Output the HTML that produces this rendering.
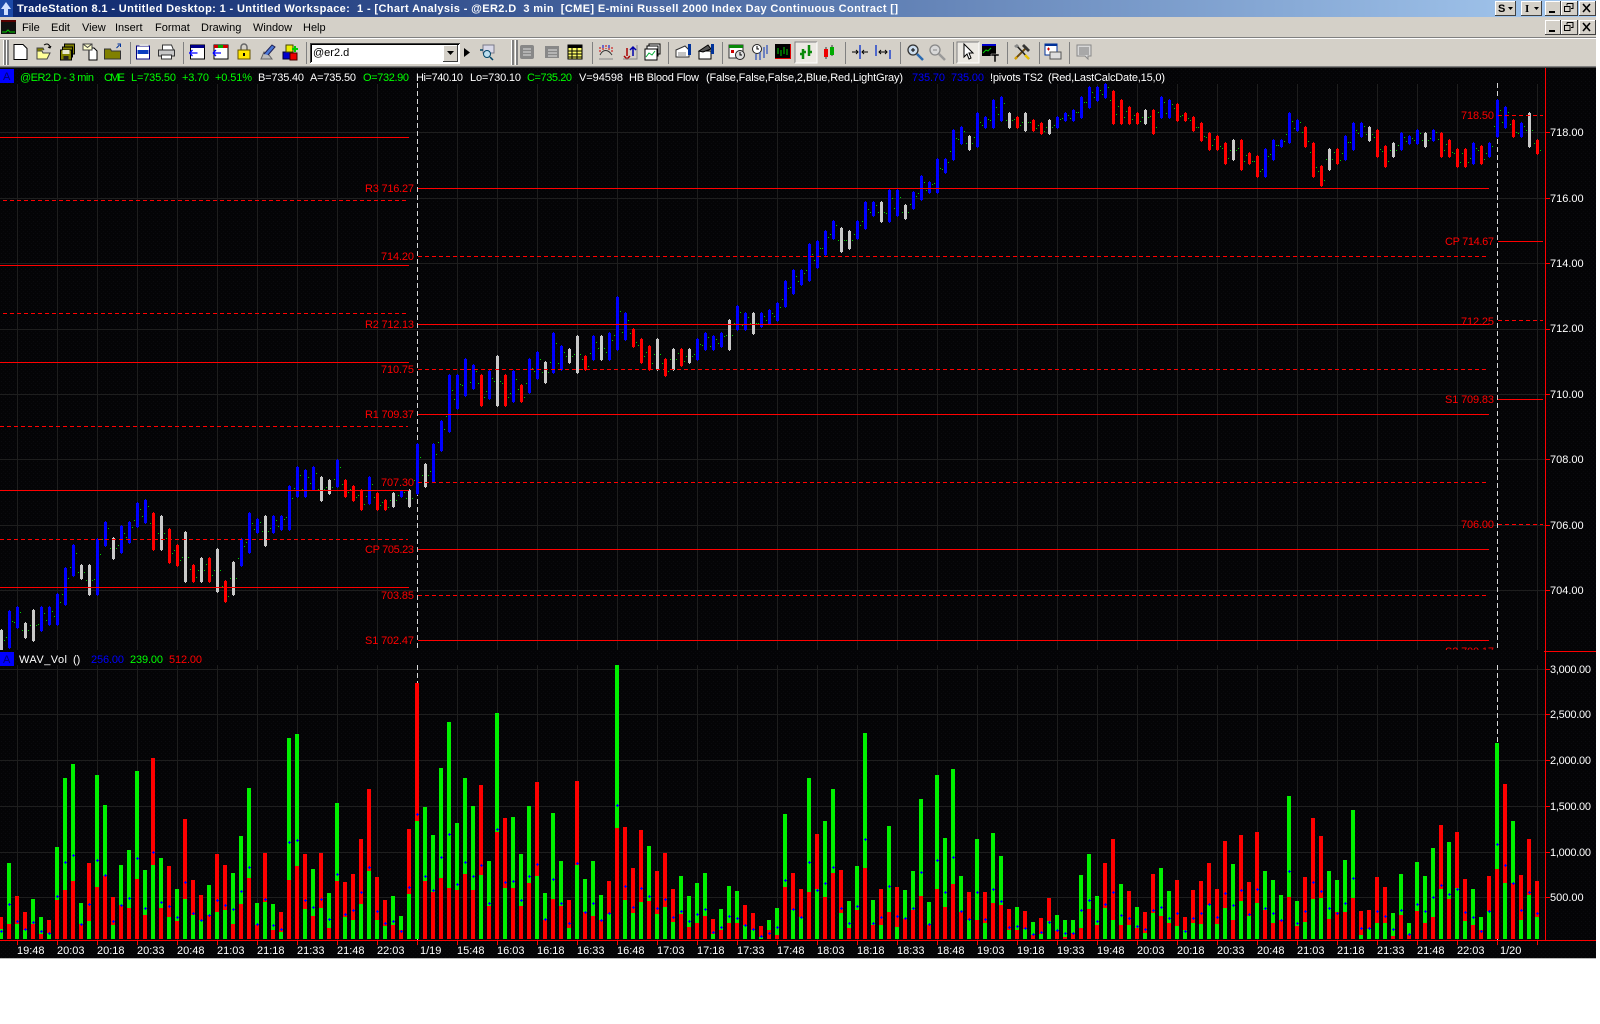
<!DOCTYPE html>
<html><head><meta charset="utf-8"><title>TradeStation 8.1</title>
<style>
html,body{margin:0;padding:0;background:#fff;width:1600px;height:1024px;overflow:hidden}
svg{position:absolute;left:0;top:0;display:block}
text{font-family:"Liberation Sans",Arial,sans-serif;font-size:11px;white-space:pre}
.m{fill:#000}.w{fill:#fff}.g{fill:#0f0}.b{fill:#00f}.r{fill:#f00}
</style></head><body>
<svg width="1600" height="1024" viewBox="0 0 1600 1024" xmlns="http://www.w3.org/2000/svg">
<defs>
<linearGradient id="tb" x1="0" x2="1" y1="0" y2="0"><stop offset="0" stop-color="#0a246a"/><stop offset="1" stop-color="#a6caf0"/></linearGradient>
<pattern id="dots" width="4" height="4" patternUnits="userSpaceOnUse"><rect width="4" height="4" fill="#040406"/><rect x="1" y="1" width="1" height="1" fill="#0b0b0f"/><rect x="3" y="3" width="1" height="1" fill="#09090d"/></pattern>
<clipPath id="pc"><rect x="0" y="68" width="1545" height="582"/></clipPath>
</defs>
<!-- window chrome -->
<rect x="0" y="0" width="1596" height="68" fill="#d4d0c8"/>
<rect x="0" y="0" width="1596" height="17" fill="url(#tb)"/>
<rect x="0" y="0" width="13" height="17" fill="#1c4aa8"/>
<path d="M6 2l5 7H8v6H4V9H1z" fill="#cfe0ff"/>
<text x="17" y="12" fill="#fff" textLength="881" lengthAdjust="spacing" style="font-weight:bold">TradeStation 8.1 - Untitled Desktop: 1 - Untitled Workspace:  1 - [Chart Analysis - @ER2.D  3 min  [CME] E-mini Russell 2000 Index Day Continuous Contract []</text>
<!-- menu -->
<rect x="1" y="20" width="15" height="14" fill="#101010"/><path d="M2 32h4l2-2 2 2h5" stroke="#0c0" fill="none"/><rect x="1" y="20" width="15" height="2" fill="#500"/>
<text x="22" y="31" class="m">File</text><text x="51" y="31" class="m">Edit</text><text x="82" y="31" class="m">View</text><text x="115" y="31" class="m">Insert</text><text x="155" y="31" class="m">Format</text><text x="201" y="31" class="m">Drawing</text><text x="253" y="31" class="m">Window</text><text x="303" y="31" class="m">Help</text>
<rect x="0" y="37" width="1596" height="1" fill="#808080"/><rect x="0" y="38" width="1596" height="1" fill="#fff"/>
<rect x="0" y="66" width="1596" height="1" fill="#808080"/><rect x="0" y="67" width="1596" height="1" fill="#404040"/>
<!-- title buttons -->
<g id="wb">
<g fill="#d4d0c8" stroke="none">
<rect x="1495" y="1" width="20" height="14"/><rect x="1521" y="1" width="20" height="14"/><rect x="1545" y="1" width="15" height="14"/><rect x="1561" y="1" width="16" height="14"/><rect x="1579" y="1" width="16" height="14"/>
<rect x="1545" y="20" width="15" height="14"/><rect x="1561" y="20" width="16" height="14"/><rect x="1579" y="20" width="16" height="14"/>
</g>
<path d="M1495.5 15V1.5H1515M1521.5 15V1.5H1541M1545.5 15V1.5H1560M1561.5 15V1.5H1577M1579.5 15V1.5H1595M1545.5 34V20.5H1560M1561.5 34V20.5H1577M1579.5 34V20.5H1595" stroke="#fff" fill="none"/>
<path d="M1495 15.5H1515.5V1M1521 15.5H1541.5V1M1545 15.5H1560.5V1M1561 15.5H1577.5V1M1579 15.5H1595.5V1M1545 34.5H1560.5V20M1561 34.5H1577.5V20M1579 34.5H1595.5V20" stroke="#404040" fill="none"/>
<text x="1498" y="12" class="m" style="font-weight:bold">S</text><path d="M1508 7h5l-2.5 3z"/>
<text x="1525" y="12" class="m" style="font-family:'Liberation Serif',serif;font-weight:bold">I</text><path d="M1534 7h5l-2.5 3z"/>
<path d="M1549 11h6v2h-6zM1549 30h6v2h-6z"/>
<path d="M1567 3.5h6v5h-2M1567 3.5v2M1564.5 6.5h5.5v5h-5.5zM1567 22.5h6v5h-2M1567 22.5v2M1564.5 25.5h5.5v5h-5.5z" stroke="#000" fill="none"/>
<path d="M1583 4l7 8M1590 4l-7 8M1583 23l7 8M1590 23l-7 8" stroke="#000" stroke-width="1.6" fill="none"/>
</g>
<!-- toolbar separators -->
<g fill="#808080">
<rect x="3" y="40" width="1" height="25" fill="#fff"/><rect x="4" y="40" width="2" height="25"/><rect x="6" y="40" width="1" height="25" fill="#fff"/><rect x="7" y="40" width="2" height="25"/>
<rect x="130" y="42" width="1" height="22"/><rect x="183" y="42" width="1" height="22"/><rect x="306" y="42" width="1" height="22"/>
<rect x="511" y="40" width="1" height="25" fill="#fff"/><rect x="512" y="40" width="2" height="25"/><rect x="515" y="40" width="1" height="25" fill="#fff"/><rect x="516" y="40" width="2" height="25"/>
<rect x="592" y="42" width="1" height="22"/><rect x="668" y="42" width="1" height="22"/><rect x="722" y="42" width="1" height="22"/><rect x="845" y="42" width="1" height="22"/><rect x="900" y="42" width="1" height="22"/><rect x="953" y="42" width="1" height="22"/><rect x="1007" y="42" width="1" height="22"/><rect x="1039" y="42" width="1" height="22"/><rect x="1069" y="42" width="1" height="22"/>
</g>
<!-- combo -->
<rect x="310" y="43" width="150" height="21" fill="#fff"/><path d="M310.5 63V43.5H460" stroke="#404040" fill="none"/><path d="M311.5 62V44.5H459" stroke="#000" fill="none"/>
<rect x="443" y="45" width="15" height="17" fill="#d4d0c8"/><path d="M443.5 62V45.5H458" stroke="#fff" fill="none"/><path d="M443 61.5H457.5V45" stroke="#404040" fill="none"/><path d="M447 51h7l-3.500 4z"/>
<text x="313" y="56" class="m">@er2.d</text>
<path d="M464 48l6 4.500-6 4.500z"/>
<!-- toolbar icons -->
<g transform="translate(20.500,52)"><path d="M-6.500-7.500h9l4 4v11h-13z" fill="#fff" stroke="#000"/></g>
<g transform="translate(44,52)"><path d="M-7-1h5l1 2h7l-3 6h-10z" fill="#ffff99" stroke="#444"/><path d="M-7-1v-3h6l1 2" fill="#808000" stroke="#444"/><path d="M0-7c3-2 5-1 6 2M7-6l-1 2-2-1" stroke="#000" fill="none"/></g>
<g transform="translate(67.500,52)"><rect x="-3" y="-8" width="10" height="10" fill="#808000" stroke="#000"/><rect x="-5" y="-5" width="10" height="10" fill="#808000" stroke="#000"/><rect x="-7" y="-2" width="11" height="10" fill="#808000" stroke="#000"/><rect x="-5" y="-2" width="7" height="4" fill="#e8e8d0"/><rect x="-4" y="4" width="5" height="4" fill="#222"/></g>
<g transform="translate(90,52)"><path d="M-1-4h5l3 3v9h-8z" fill="#fff" stroke="#000"/><rect x="-7" y="-8" width="9" height="6" fill="#ffffcc" stroke="#444"/><path d="M-7-8l4.500 3.500L2-8" stroke="#444" fill="none"/></g>
<g transform="translate(112.500,52)"><path d="M-8-3h6l1 2h9v8h-16z" fill="#808000" stroke="#333"/><path d="M4-4l3-3M5-8h3v3" stroke="#00329a" fill="none"/></g>
<g transform="translate(143.500,52)"><rect x="-7" y="-6" width="13" height="13" fill="#fff" stroke="#000080"/><rect x="-6" y="-2" width="11" height="4" fill="#0a3cc0"/><rect x="-4" y="-8" width="9" height="2" fill="#ddd"/></g>
<g transform="translate(166.500,52)"><path d="M-4-7h9l2 5h-11z" fill="#fff" stroke="#333"/><rect x="-8" y="-2" width="16" height="6" fill="#c8c8c8" stroke="#333"/><rect x="-5" y="3" width="10" height="4" fill="#fff" stroke="#333"/></g>
<g transform="translate(197.500,52)"><rect x="-7" y="-7" width="14" height="14" fill="#fff" stroke="#000"/><rect x="-7" y="-7" width="14" height="3" fill="#00008b"/><path d="M-8 1h8M-8 1l3-3M-8 1l3 3" stroke="#00f" fill="none" stroke-width="1.300"/></g>
<g transform="translate(221,52)"><rect x="-7" y="-7" width="14" height="14" fill="#fff" stroke="#000"/><rect x="-7" y="-7" width="4" height="3" fill="#c00"/><rect x="-3" y="-7" width="5" height="3" fill="#0a0"/><rect x="2" y="-7" width="5" height="3" fill="#c00"/><path d="M-8 1h8M-8 1l3-3M-8 1l3 3" stroke="#00f" fill="none" stroke-width="1.300"/></g>
<g transform="translate(244,52)"><path d="M-3-2v-3a3 3 0 0 1 6 0v3" stroke="#666" stroke-width="1.500" fill="none"/><rect x="-6" y="-2" width="12" height="9" fill="#ffe600" stroke="#665500"/><rect x="-1" y="1" width="2" height="3" fill="#000"/></g>
<g transform="translate(267,52)"><path d="M-6 7l3-7 5 3 3 4z" fill="#bbb" stroke="#666"/><path d="M-3 2L5-7l3 2-7 8" fill="#4a78d8" stroke="#225"/></g>
<g transform="translate(290,52)"><rect x="-7" y="0" width="7" height="7" fill="#00c" stroke="#003"/><rect x="0" y="1" width="7" height="7" fill="#e00" stroke="#400"/><rect x="-4" y="-7" width="7" height="7" fill="#ee0" stroke="#440"/><path d="M5-6v6M2-3h6" stroke="#0c0" stroke-width="2"/></g>
<g transform="translate(487,52)"><rect x="-4" y="-7" width="11" height="8" fill="#d8d8e8" stroke="#778"/><circle cx="0" cy="2" r="3.500" fill="#bde" stroke="#046"/><path d="M3 5l3 3M-7-2h3" stroke="#046" stroke-width="1.500"/></g>
<g transform="translate(527,52)" fill="#9a9a9a"><rect x="-7" y="-7" width="14" height="14" rx="2" fill="#888"/><path d="M-4-3h8M-4 0h8M-4 3h8" stroke="#ddd"/></g>
<g transform="translate(552,52)"><rect x="-7" y="-6" width="14" height="12" fill="#888"/><path d="M-4-2h9M-4 1h9M-4 4h9" stroke="#e0e0e0"/></g>
<g transform="translate(575,52)"><rect x="-7" y="-7" width="14" height="14" fill="#ffff66" stroke="#000"/><rect x="-7" y="-7" width="14" height="3" fill="#000"/><path d="M-7-1h14M-7 2h14M-7 5h14M-3-4v11M2-4v11" stroke="#000" fill="none"/></g>
<g transform="translate(606,52)"><path d="M-7 7h14" stroke="#888"/><path d="M-6 3c3-6 8-6 12 0" stroke="#333" fill="none"/><path d="M-6-5v5M-3-7v5M0-7v4M3-7v5M6-5v5" stroke="#c00" stroke-dasharray="2 1"/><path d="M-3-7v3M3-7v3" stroke="#00c"/></g>
<g transform="translate(630,52)"><path d="M-3 6v-8M-6-2l3-3 3 3" transform="rotate(180 -3 1)" stroke="#a00" fill="none" stroke-width="1.500"/><path d="M3 4v-9M0-2l3-3 3 3" stroke="#00a" fill="none" stroke-width="1.500"/><path d="M-7 7h14V-7" stroke="#888" fill="none"/></g>
<g transform="translate(652,52)"><rect x="-3" y="-8" width="11" height="10" fill="#fff" stroke="#000"/><rect x="-5" y="-6" width="11" height="10" fill="#fff" stroke="#000"/><rect x="-7" y="-3" width="12" height="11" fill="#fff" stroke="#000"/><path d="M-6 5l3-4 3 2 3-4" stroke="#0a3" fill="none"/></g>
<g transform="translate(683,52)"><path d="M-7-2l9-4 4 4v7h-13z" fill="#fff" stroke="#333"/><path d="M-5 1h8M-5 3h8" stroke="#888"/><rect x="5" y="-8" width="3" height="11" fill="#00329a"/></g>
<g transform="translate(706,52)"><rect x="-7" y="-1" width="12" height="8" fill="#fff" stroke="#000"/><path d="M-7-1l9-6 3 4-8 3z" fill="#555" stroke="#000"/><rect x="5" y="-8" width="3" height="10" fill="#00329a"/></g>
<g transform="translate(737,52)"><rect x="-8" y="-7" width="14" height="13" fill="#fff" stroke="#333"/><rect x="-8" y="-7" width="14" height="3" fill="#0a8a0a"/><circle cx="3" cy="3" r="4.500" fill="#ddd" stroke="#222"/><path d="M3 0v3h2" stroke="#000" fill="none"/><rect x="-6" y="-2" width="3" height="3" fill="#c00"/></g>
<g transform="translate(759,52)"><circle cx="-2" cy="-3" r="4.500" fill="#fff" stroke="#222"/><path d="M-2-6v3h2" stroke="#000" fill="none"/><path d="M-3 2v6M1 0v8M5-5v11M8-7v9" stroke="#3355bb" stroke-width="1.300"/></g>
<g transform="translate(783,52)"><rect x="-8" y="-8" width="16" height="15" fill="#000"/><path d="M-5-4v6M-2-2v6M1-5v7M4-3v6" stroke="#0c0"/><path d="M-8 6.500h16M7.500-8v15" stroke="#d00"/></g>
<g transform="translate(806,52)"><rect x="-11" y="-10" width="22" height="21" fill="#ece9e3"/><path d="M-11 11v-21h22" stroke="#808080" fill="none"/><path d="M-11 11h22V-10" stroke="#fff" fill="none"/><path d="M-3-3v10M-6 2h3M3-7v11M3 0h3M-3 0h3" stroke="#0a8a0a" stroke-width="2.500"/></g>
<g transform="translate(829,52)"><path d="M-3-5v12M3-7v11" stroke="#333"/><rect x="-5" y="-3" width="4" height="8" fill="#e00"/><rect x="1" y="-5" width="4" height="8" fill="#0a0"/></g>
<g transform="translate(860,52)"><path d="M0-7v14" stroke="#2244cc" stroke-width="1.500"/><path d="M-8 0h6M-4-2l2 2-2 2M8 0H2M4-2l-2 2 2 2" stroke="#000" fill="none"/></g>
<g transform="translate(883,52)"><path d="M-7-7v11M7-2v9" stroke="#2244cc" stroke-width="1.500"/><path d="M-4 0h8M-2-2l-2 2 2 2M2-2l2 2-2 2" stroke="#000" fill="none"/></g>
<g transform="translate(915,52)"><circle cx="-2" cy="-2" r="5" fill="#cde" stroke="#333" stroke-width="1.300"/><path d="M-4-2h4M-2-4v4" stroke="#000"/><path d="M2 2l6 6" stroke="#2a6ab0" stroke-width="2.500"/></g>
<g transform="translate(937,52)"><circle cx="-2" cy="-2" r="5" fill="#d8d8d8" stroke="#888" stroke-width="1.300"/><path d="M-4-2h4" stroke="#888"/><path d="M2 2l6 6" stroke="#999" stroke-width="2.500"/></g>
<g transform="translate(968,52)"><rect x="-11" y="-10" width="22" height="21" fill="#ece9e3"/><path d="M-11 11v-21h22" stroke="#808080" fill="none"/><path d="M-11 11h22V-10" stroke="#fff" fill="none"/><path d="M-4-8v13l3-3 2 5 2-1-2-5h4z" fill="#fff" stroke="#000"/></g>
<g transform="translate(990,52)"><rect x="-8" y="-7" width="14" height="11" fill="#000"/><rect x="-8" y="-8" width="14" height="2" fill="#00c"/><path d="M-7 1l3-3 2 1 3-3" stroke="#0c0" fill="none"/><path d="M1 2h8v2H6v6H4V4H1z" fill="#000" stroke="#d4d0c8" stroke-width=".5"/></g>
<g transform="translate(1022,52)"><path d="M-7 7L5-5" stroke="#6b4a10" stroke-width="2"/><path d="M-7 7l2-2" stroke="#d8a000" stroke-width="2.400"/><path d="M2-8l6 6-2 2-6-6z" fill="#333"/><path d="M-6-7L7 7" stroke="#222" stroke-width="1.600"/><path d="M3 3l4 4" stroke="#e8c000" stroke-width="2.400"/><path d="M-8-6l3-2 2 2-3 2z" fill="#888"/></g>
<g transform="translate(1053,52)"><rect x="-8" y="-8" width="12" height="11" fill="#fff" stroke="#00329a"/><rect x="-8" y="-8" width="12" height="2" fill="#00329a"/><rect x="-3" y="0" width="11" height="7" fill="#ddd" stroke="#555"/><path d="M-6-3h3M-4.500-4.500v3" stroke="#c00"/></g>
<g transform="translate(1084,52)"><path d="M-7-7h14v11h-3v3l-3-3h-8z" fill="#d8d8d8" stroke="#888"/><path d="M-5-4h10M-5-2h10M-5 0h10M-5 2h10" stroke="#777"/></g>

<!-- chart background -->
<rect x="0" y="68" width="1596" height="890" fill="url(#dots)"/>
<rect x="0" y="958" width="1596" height="1" fill="#b8b8b8"/>
<!-- grid -->
<path id="grid" stroke="#1e1e1e" fill="none" d="M0 132.500H1545M0 198.500H1545M0 263.500H1545M0 329.500H1545M0 394.500H1545M0 459.500H1545M0 525.500H1545M0 590.500H1545M0 669.500H1545M0 714.500H1545M0 760.500H1545M0 806.500H1545M0 852.500H1545M0 897.500H1545"/>
<path d="M417.500 83V650M1497.500 83V650M417.500 665V940M1497.500 665V940" stroke="#d8d8d8" stroke-dasharray="5 3" fill="none"/>
<g id="bars" clip-path="url(#pc)"></g>
<g id="vols"></g>
<!-- pivots -->
<g clip-path="url(#pc)">
<path fill="none" stroke="#f00" d="M0 137.500H409M0 265.500H409M0 362.500H409M0 490.500H409M0 587.500H409M418 188.500H1489M418 324.500H1489M418 414.500H1489M418 549.500H1489M418 640.500H1489M1498 241.500H1543M1498 399.500H1543"/>
<path fill="none" stroke="#f00" stroke-dasharray="4 3" d="M3 200.500H408M3 313.500H408M0 426.500H408M0 539.500H408M418 256.500H1489M418 369.500H1489M418 482.500H1489M418 595.500H1489M1498 115.500H1543M1498 320.500H1543M1498 524.500H1543"/>
<g class="r" text-anchor="end">
<text x="414" y="192" textLength="49">R3 716.27</text><text x="414" y="260" textLength="33">714.20</text><text x="414" y="328" textLength="49">R2 712.13</text><text x="414" y="373" textLength="33">710.75</text><text x="414" y="418" textLength="49">R1 709.37</text><text x="414" y="486" textLength="33">707.30</text><text x="414" y="553" textLength="49">CP 705.23</text><text x="414" y="599" textLength="33">703.85</text><text x="414" y="644" textLength="49">S1 702.47</text>
<text x="1494" y="119" textLength="33">718.50</text><text x="1494" y="245" textLength="49">CP 714.67</text><text x="1494" y="325" textLength="33">712.25</text><text x="1494" y="403" textLength="49">S1 709.83</text><text x="1494" y="528" textLength="33">706.00</text><text x="1494" y="655" textLength="49">S2 700.17</text>
</g></g>
<!-- axes -->
<path fill="none" stroke="#f00" d="M1545.500 68V940M1544 651.500H1596M0 940.500H1596M1546 132.500h4M1546 198.500h4M1546 263.500h4M1546 329.500h4M1546 394.500h4M1546 459.500h4M1546 525.500h4M1546 590.500h4M1546 669.500h4M1546 714.500h4M1546 760.500h4M1546 806.500h4M1546 852.500h4M1546 897.500h4"/>
<path id="xt" fill="none" stroke="#f00"/>
<g class="w">
<text x="1550" y="136">718.00</text><text x="1550" y="202">716.00</text><text x="1550" y="267">714.00</text><text x="1550" y="332">712.00</text><text x="1550" y="398">710.00</text><text x="1550" y="463">708.00</text><text x="1550" y="529">706.00</text><text x="1550" y="594">704.00</text>
<text x="1550" y="673" textLength="41">3,000.00</text><text x="1550" y="718" textLength="41">2,500.00</text><text x="1550" y="764" textLength="41">2,000.00</text><text x="1550" y="810" textLength="41">1,500.00</text><text x="1550" y="856" textLength="41">1,000.00</text><text x="1550" y="901">500.00</text>
<text x="17" y="954">19:48</text><text x="57" y="954">20:03</text><text x="97" y="954">20:18</text><text x="137" y="954">20:33</text><text x="177" y="954">20:48</text><text x="217" y="954">21:03</text><text x="257" y="954">21:18</text><text x="297" y="954">21:33</text><text x="337" y="954">21:48</text><text x="377" y="954">22:03</text><text x="420" y="954">1/19</text><text x="457" y="954">15:48</text><text x="497" y="954">16:03</text><text x="537" y="954">16:18</text><text x="577" y="954">16:33</text><text x="617" y="954">16:48</text><text x="657" y="954">17:03</text><text x="697" y="954">17:18</text><text x="737" y="954">17:33</text><text x="777" y="954">17:48</text><text x="817" y="954">18:03</text><text x="857" y="954">18:18</text><text x="897" y="954">18:33</text><text x="937" y="954">18:48</text><text x="977" y="954">19:03</text><text x="1017" y="954">19:18</text><text x="1057" y="954">19:33</text><text x="1097" y="954">19:48</text><text x="1137" y="954">20:03</text><text x="1177" y="954">20:18</text><text x="1217" y="954">20:33</text><text x="1257" y="954">20:48</text><text x="1297" y="954">21:03</text><text x="1337" y="954">21:18</text><text x="1377" y="954">21:33</text><text x="1417" y="954">21:48</text><text x="1457" y="954">22:03</text><text x="1500" y="954">1/20</text>
</g>
<!-- legends -->
<rect x="0" y="69" width="14" height="14" fill="#00f"/><text x="3" y="80" fill="#000070">A</text>
<text x="20" y="81" class="g" textLength="74">@ER2.D - 3 min</text><text x="104" y="81" class="g" textLength="21">CME</text><text x="131" y="81" class="g" textLength="45">L=735.50</text><text x="182" y="81" class="g" textLength="27">+3.70</text><text x="215" y="81" class="g" textLength="37">+0.51%</text>
<text x="258" y="81" class="w" textLength="46">B=735.40</text><text x="310" y="81" class="w" textLength="46">A=735.50</text><text x="363" y="81" class="g" textLength="46">O=732.90</text><text x="416" y="81" class="w" textLength="47">Hi=740.10</text><text x="470" y="81" class="w" textLength="51">Lo=730.10</text><text x="527" y="81" class="g" textLength="45">C=735.20</text><text x="579" y="81" class="w" textLength="44">V=94598</text><text x="629" y="81" class="w" textLength="70">HB Blood Flow</text><text x="706" y="81" class="w" textLength="197">(False,False,False,2,Blue,Red,LightGray)</text><text x="912" y="81" class="b" textLength="33">735.70</text><text x="951" y="81" class="b" textLength="33">735.00</text><text x="990" y="81" class="w" textLength="53">!pivots TS2</text><text x="1048" y="81" class="w" textLength="117">(Red,LastCalcDate,15,0)</text>
<rect x="0" y="652" width="14" height="14" fill="#00f"/><text x="3" y="663" fill="#000070">A</text>
<text x="19" y="663" class="w" textLength="48">WAV_Vol</text><text x="73" y="663" class="w">()</text><text x="91" y="663" class="b" textLength="33">256.00</text><text x="130" y="663" class="g" textLength="33">239.00</text><text x="169" y="663" class="r" textLength="33">512.00</text>
</svg>
<script>
(function(){
var g=document.getElementById('grid'),d=g.getAttribute('d');
for(var k=0;k<39;k++){var x=17+40*k;if(x==417||x==1497)continue;d+='M'+(x+.5)+' 84V650M'+(x+.5)+' 665V940';}
g.setAttribute('d',d);
var xd='';for(k=0;k<39;k++){x=17+40*k;xd+='M'+(x+.5)+' 941v4';}
document.getElementById('xt').setAttribute('d',xd);
var P="g629-650 b610-648 b606-628 g622-638 g609-641 b606-631 b606-625 b593-625 b567-605 b544-576 g564-579 g564-595 b538-595 b521-546 g537-559 b525-553 b521-543 b502-527 b499-523 r512-550 g515-550 r528-563 r544-566 g531-582 r564-582 g557-582 r557-582 g548-592 r580-602 g561-595 b538-566 b512-553 b518-533 g515-546 b515-533 b515-530 b485-530 b466-497 b469-497 b466-490 g476-501 g479-494 b459-487 r479-497 r485-501 r489-510 b476-504 r492-510 r499-510 g492-507 b490-497 g489-507 b443-494 g463-487 b443-482 b420-451 b374-432 b374-409 b358-396 b364-389 r374-406 b370-399 g355-406 r374-406 b370-402 r384-402 b358-393 b351-379 g361-383 b332-373 b345-370 g348-363 g335-373 r355-370 b335-360 g335-360 b332-360 b296-350 b312-340 r328-347 r338-363 r345-370 g338-370 r358-376 g348-370 r348-366 g348-363 b338-360 b332-350 b335-350 b332-347 g319-350 b305-330 b312-330 g312-334 b312-327 b309-324 b302-321 b280-307 b269-294 b269-285 b243-281 b240-268 b230-255 b220-239 g227-252 g230-249 b220-239 b201-229 b201-216 g201-222 b189-222 b189-216 g204-219 b191-209 b175-200 b181-193 b158-193 b158-173 b129-160 b126-144 g135-150 b112-147 b116-128 b99-128 b96-121 g112-128 r116-128 g112-131 r119-131 r122-134 g119-134 b116-128 b112-121 b109-121 b96-118 b86-108 b86-101 b83-98 r90-124 r99-124 r106-124 r112-124 g109-124 r109-134 b96-118 b99-118 r103-121 r112-121 r116-131 r122-141 r132-150 r135-150 r142-164 g139-160 r139-170 r152-164 r155-177 b148-177 b139-160 b139-147 b112-143 b119-131 r126-147 r142-177 r165-186 g148-170 r148-164 b135-160 b122-150 b122-137 g126-141 r129-157 r145-167 g142-157 b132-150 b135-144 b129-144 g132-147 b129-141 r132-157 r139-157 r148-167 r148-167 b142-164 r145-164 b142-157 b99-137 b106-128 r119-137 b122-137 g112-147 r139-154".split(' ');
var V="r801,838 g639,822 r738,822 r786,840 g747,822 g801,852 r810,850 g591,750 g384,720 g342,693 g759,822 r639,813 g375,711 g465,678 r741,825 g645,765 g600,774 g363,687 g660,795 r324,645 g624,774 r648,801 g717,813 r507,747 r690,795 r735,810 g705,795 r612,786 r645,780 g669,822 g558,762 g414,684 g759,825 r609,756 g762,840 r786,846 g264,690 g252,648 r612,777 g657,798 r609,774 g729,834 g459,693 r696,801 r672,810 r567,762 r417,663 r681,810 r750,828 g738,825 g798,840 r537,732 r99,513 g471,693 g555,726 g354,684 g216,714 g519,720 g384,672 g468,720 r405,675 g633,768 g189,546 r504,714 g501,714 g612,768 g468,699 r396,678 g729,810 g489,747 g633,768 r750,834 r393,645 g687,786 g633,798 g735,810 r693,792 g45,534 r531,750 r654,789 r540,756 g588,753 r663,792 r609,771 r717,816 g678,792 g738,831 g699,819 g669,798 r807,852 g777,840 g708,819 g723,819 r765,825 r789,840 r828,860 g810,840 g774,855 g492,711 r669,780 r717,801 g384,726 r552,717 g513,741 g417,669 r660,789 g753,834 g648,780 g249,654 g750,825 r717,825 g528,786 r711,831 g720,807 g663,780 g447,738 g756,825 g375,717 g564,771 g357,702 g678,786 r726,810 g567,810 r726,819 g549,759 g618,765 r777,840 g771,840 r783,837 g816,855 r804,852 r744,813 g795,843 g810,860 g810,850 g675,834 g612,777 g738,825 r639,774 r567,810 g702,825 r723,825 g771,834 r786,849 r672,789 g654,798 g723,819 r690,828 r801,840 r720,819 r693,822 r639,765 r717,822 r573,774 g642,810 r555,753 r696,798 r546,759 g663,780 g690,819 g735,810 g438,741 g753,828 r681,816 r504,747 r558,744 g663,807 g690,786 g630,786 g480,744 r783,855 r780,837 r681,819 r711,819 g789,858 g672,795 g819,855 g636,783 g678,819 g594,801 r525,717 g576,747 r546,714 r687,813 g717,825 g801,840 r678,783 g279,657 r402,699 g513,699 r675,810 r567,735 r693,801".split(' ');
function R(x,y,w,h){return 'M'+x+' '+y+'h'+w+'v'+h+'h'+(-w)+'z';}
var c={r:'',g:'',b:'',t:''},i,s,t,b,cx,a;
for(i=0;i<P.length;i++){s=P[i];var col=s[0];a=s.slice(1).split('-');t=+a[0];b=+a[1];cx=8*i;
 c[col]+=R(cx+1,t,1,1)+R(cx,t+1,3,b-t-1)+R(cx+1,b,1,1);
 var f=col=='b'?.72:col=='r'?.28:.5;var yl=Math.round(t+(b-t)*f),yr=Math.round(t+(b-t)*(1-f));
 c.t+=R(cx-2,yl,1,1)+R(cx+4,yr,1,1);}
document.getElementById('bars').innerHTML='<path fill="#00d000" d="'+c.t+'"/><path fill="#00f" d="'+c.b+'"/><path fill="#f00" d="'+c.r+'"/><path fill="#c8c8c8" d="'+c.g+'"/>';
var vr='',vg='',pl='';
for(i=0;i<V.length;i++){s=V[i];var top=s[0];a=s.slice(1).split(',');t=Math.round(650+a[0]/3);var sp=Math.round(650+a[1]/3);
 var x0=8*i-1,tp=R(x0,t,4,sp-t),bt=R(x0,sp,4,939-sp);
 if(top=='r'){vr+=tp;vg+=bt;}else{vg+=tp;vr+=bt;}
 var py=Math.round(650+((+a[0]+879)/2+3)/3);cx=8*i+1;pl+=R(cx-1,py,3,1)+R(cx,py-1,1,3);}
document.getElementById('vols').innerHTML='<path fill="#f00" d="'+vr+'"/><path fill="#00f000" d="'+vg+'"/><path fill="#00f" d="'+pl+'"/>';
})();
</script>
</body></html>
